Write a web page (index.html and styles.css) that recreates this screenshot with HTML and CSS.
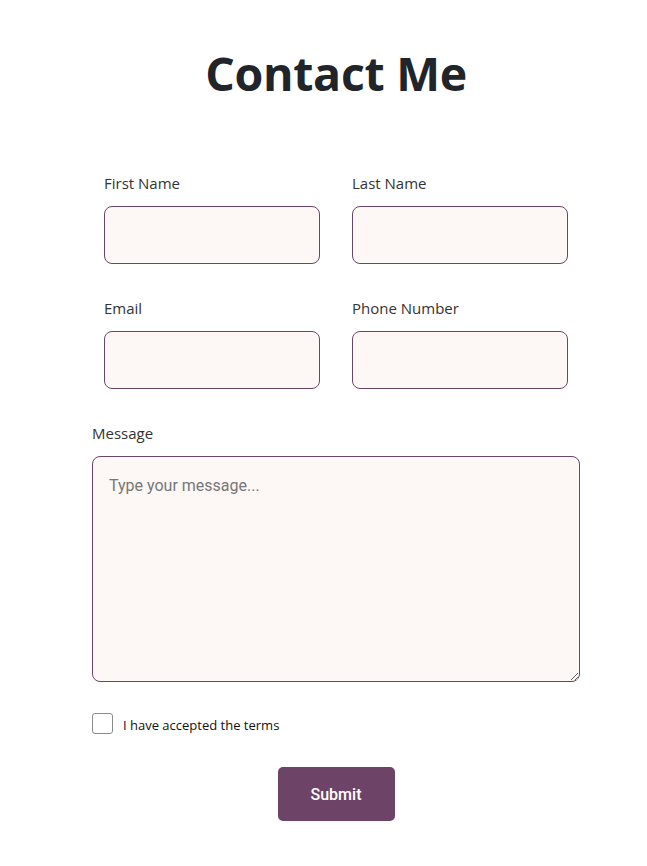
FILE: index.html
```html
<!DOCTYPE html>
<html lang="en">
<head>
<meta charset="utf-8">
<title>Contact Me</title>
<link rel="stylesheet" href="styles.css">
</head>
<body>
<main class="page">
  <h1 class="title">Contact Me</h1>
  <form class="form">
    <div class="grid">
      <div class="field">
        <label class="label" for="fn">First Name</label>
        <input class="input" id="fn" type="text">
      </div>
      <div class="field">
        <label class="label" for="ln">Last Name</label>
        <input class="input" id="ln" type="text">
      </div>
      <div class="field">
        <label class="label" for="em">Email</label>
        <input class="input" id="em" type="email">
      </div>
      <div class="field">
        <label class="label" for="ph">Phone Number</label>
        <input class="input" id="ph" type="tel">
      </div>
    </div>
    <div class="field message">
      <label class="label" for="msg">Message</label>
      <textarea class="textarea" id="msg" placeholder="Type your message..."></textarea>
    </div>
    <label class="check">
      <input class="checkbox" type="checkbox">
      <span class="check-text">I have accepted the terms</span>
    </label>
    <div class="actions">
      <button class="submit" type="button">Submit</button>
    </div>
  </form>
</main>
</body>
</html>
```
FILE: styles.css
```css
* { box-sizing: border-box; }
html, body { margin: 0; background: #fff; }
body {
  font-family: "Open Sans", "Noto Sans", sans-serif;
  color: #333;
}
.page {
  padding: 40px 67px 40px 92px;
}
.title {
  margin: 0;
  text-align: center;
  font-size: 46.5px;
  line-height: 66px;
  font-weight: 700;
  color: #212529;
  letter-spacing: -0.3px;
}
.form {
  margin-top: 66px;
  width: 488px;
}
.grid {
  display: grid;
  grid-template-columns: 216px 216px;
  column-gap: 32px;
  row-gap: 33px;
  padding: 0 12px;
}
.field {
  display: flex;
  flex-direction: column;
}
.label {
  font-size: 15px;
  line-height: 22px;
  color: #333;
  margin-bottom: 12px;
}
.input {
  height: 58px;
  border: 1px solid #6b4468;
  border-radius: 8px;
  background: #fdf8f6;
  padding: 0 12px;
  font: 16px Roboto, sans-serif;
  outline: none;
}
.message { margin-top: 33px; }
.textarea {
  height: 226px;
  border: 1px solid #6b4468;
  border-radius: 8px;
  background: #fdf8f6;
  padding: 18px 16px;
  font: 16px/22px Roboto, sans-serif;
  color: #333;
  resize: vertical;
  outline: none;
}
.textarea::placeholder { color: #777; }
.check {
  display: flex;
  align-items: center;
  gap: 10px;
  height: 21px;
  margin-top: 31px;
}
.checkbox {
  appearance: none;
  -webkit-appearance: none;
  margin: 0;
  width: 21px;
  height: 21px;
  border: 1px solid #8a8a8a;
  border-radius: 3px;
  background: #fff;
}
.check-text {
  font-size: 13px;
  line-height: 18px;
  padding-top: 2px;
  color: #111;
}
.actions {
  display: flex;
  justify-content: center;
  margin-top: 33px;
}
.submit {
  width: 117px;
  height: 54px;
  border: none;
  border-radius: 5px;
  background: #6d4468;
  color: #fff;
  font: 500 16px Roboto, sans-serif;
  cursor: pointer;
}
```
